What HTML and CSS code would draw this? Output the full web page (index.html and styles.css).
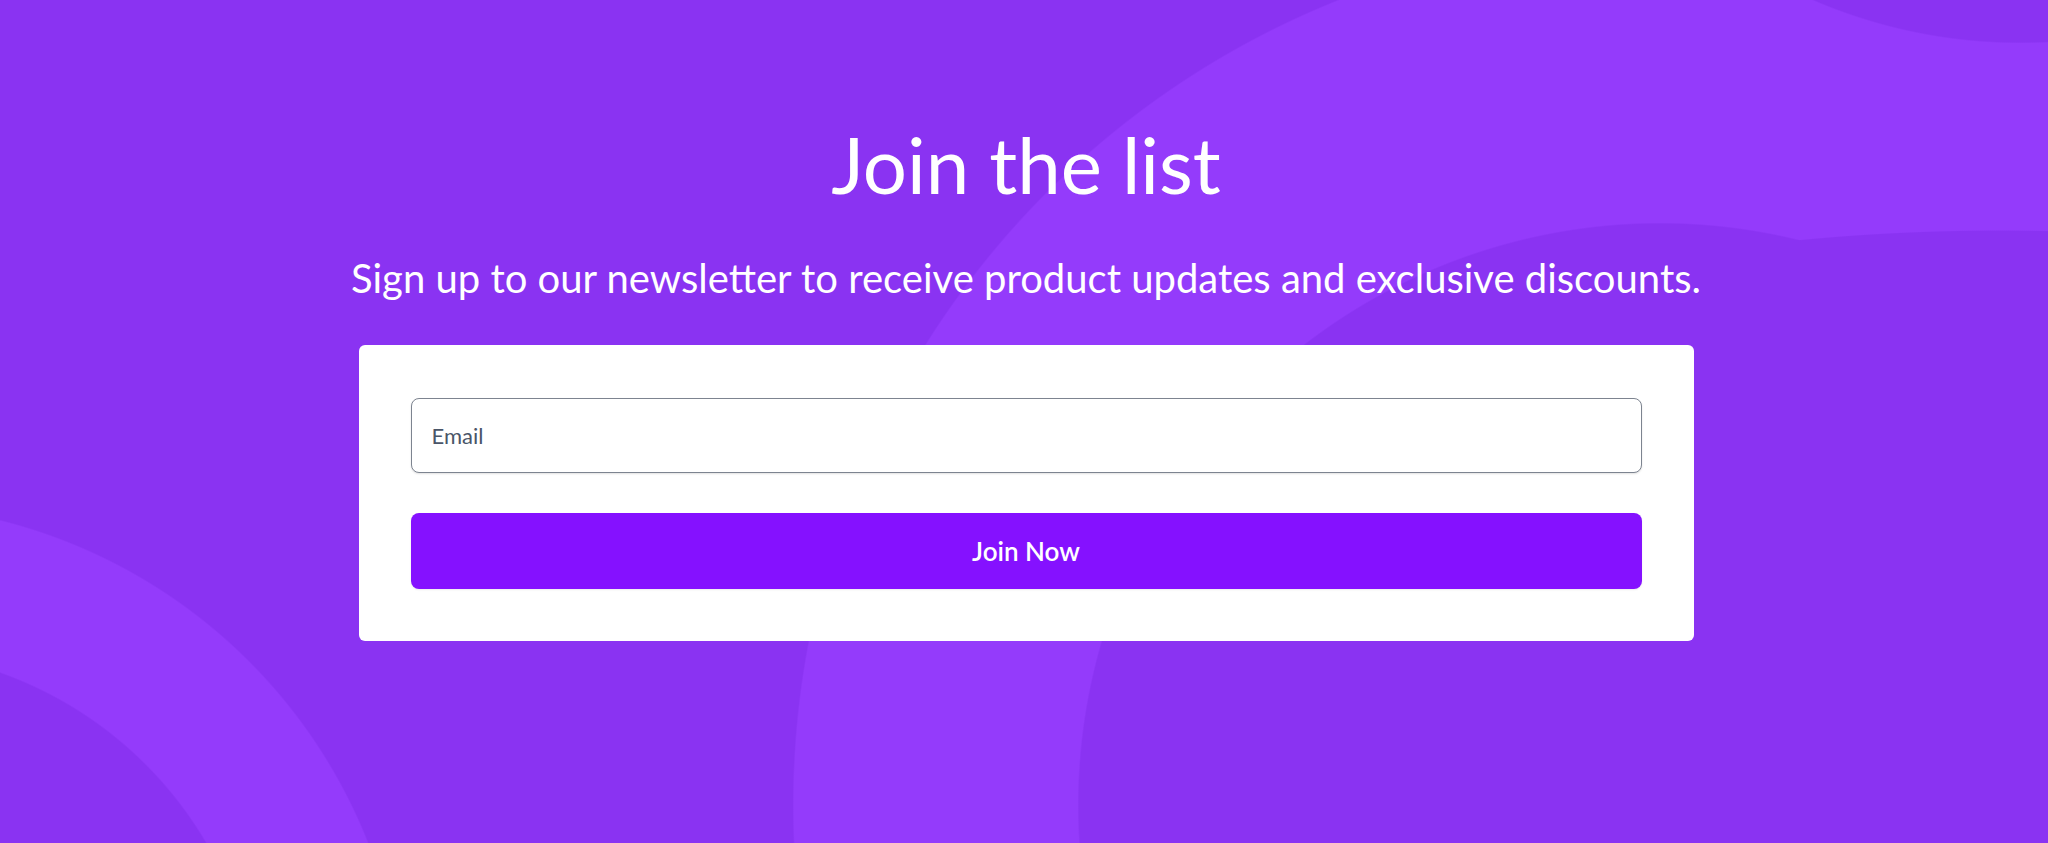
FILE: index.html
```html
<!DOCTYPE html>
<html lang="en">
<head>
<meta charset="utf-8">
<title>Join the list</title>
<link rel="stylesheet" href="styles.css">
</head>
<body>
  <main class="signup">
    <h1 class="signup-title">Join the list</h1>
    <p class="signup-sub">Sign up to our newsletter to receive product updates and exclusive discounts.</p>
    <form class="signup-card">
      <input class="signup-input" type="email" placeholder="Email">
      <button class="signup-btn" type="button">Join Now</button>
    </form>
  </main>
</body>
</html>
```

FILE: styles.css
```css
html, body {
  margin: 0;
  padding: 0;
  height: 100%;
}

body {
  min-height: 843px;
  font-family: Lato, "Noto Sans", sans-serif;
  background:
    radial-gradient(circle at 2020px -480px, #8a33f2 522px, #943bfb 523.5px, #943bfb 699px, rgba(148,59,251,0) 700.5px),
    radial-gradient(ellipse 900px 380px at 2000px 610px, #8a33f2 99.7%, rgba(138,51,242,0) 100%),
    radial-gradient(circle at 1660px 805px, rgba(148,59,251,0) 581px, #943bfb 582.5px, #943bfb 866px, rgba(148,59,251,0) 867.5px),
    radial-gradient(circle at -130px 1040px, rgba(148,59,251,0) 389px, #943bfb 390.5px, #943bfb 535px, rgba(148,59,251,0) 536.5px),
    #8a33f2;
  overflow: hidden;
}

.signup {
  display: flex;
  flex-direction: column;
  align-items: center;
  padding: 118px 0 0 4px;
}

.signup-title {
  margin: 0;
  font-size: 78px;
  line-height: 1.2;
  font-weight: 400;
  color: #ffffff;
}

.signup-sub {
  margin: 42px 0 0;
  font-size: 40px;
  line-height: 1.2;
  font-weight: 400;
  color: #ffffff;
}

.signup-card {
  margin-top: 43px;
  width: 1335px;
  box-sizing: border-box;
  background: #ffffff;
  border-radius: 6px;
  padding: 53px 52px 52px;
  display: flex;
  flex-direction: column;
  gap: 40px;
}

.signup-input {
  height: 75px;
  box-sizing: border-box;
  border: 1.5px solid #7d8490;
  border-radius: 8px;
  padding: 0 20px;
  font-family: Lato, "Noto Sans", sans-serif;
  font-size: 22px;
  color: #374151;
  background: #ffffff;
  box-shadow: 0 1px 2px rgba(0,0,0,0.12);
  outline: none;
}

.signup-input::placeholder {
  color: #4a5568;
}

.signup-btn {
  height: 76px;
  border: 0;
  border-radius: 8px;
  background: #8511ff;
  color: #ffffff;
  font-family: Lato, "Noto Sans", sans-serif;
  font-size: 26px;
  font-weight: 600;
  cursor: pointer;
  box-shadow: 0 1px 2px rgba(0,0,0,0.08);
}
```
